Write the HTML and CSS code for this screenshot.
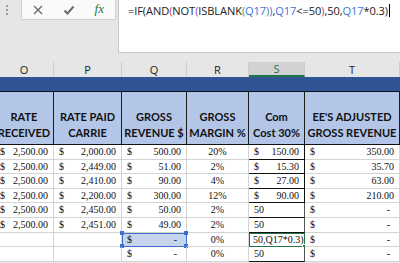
FILE: index.html
```html
<!DOCTYPE html>
<html lang="en">
<head>
    <meta charset="UTF-8">
    <title>Sheet - Com Cost</title>
    <link rel="stylesheet" href="styles.css">
</head>
<body>

<div class="formula-bar">
    <div class="grip"><i></i><i></i><i></i></div>
    <div class="fx-box">
        <svg class="ico" width="12" height="12" viewBox="0 0 12 12"><path d="M2 2 L10 10 M10 2 L2 10" stroke="#6b6b6b" stroke-width="1.4" fill="none"/></svg>
        <svg class="ico" width="12" height="12" viewBox="0 0 12 12"><path d="M1.5 6.5 L4.5 9.5 L10.5 2.5" stroke="#6b6b6b" stroke-width="2" fill="none"/></svg>
        <span class="fx">fx</span>
    </div>
    <div class="formula">=IF(AND<span class="p2">(</span>NOT<span class="p3">(</span>ISBLANK<span class="p4">(</span><span class="ref">Q17</span><span class="p4">)</span><span class="p3">)</span>,<span class="ref">Q17</span>&lt;=50<span class="p2">)</span>,50,<span class="ref">Q17</span>*0.3)<span class="caret"></span></div>
</div>

<div class="sheet">
    <div class="col-heads">
        <div>O</div>
        <div>P</div>
        <div>Q</div>
        <div>R</div>
        <div class="active">S</div>
        <div>T</div>
    </div>
    <div class="band"></div>

    <div class="grid">
        <div class="hd">RATE<br>RECEIVED</div>
        <div class="hd">RATE PAID<br>CARRIE</div>
        <div class="hd">GROSS<br>REVENUE $</div>
        <div class="hd">GROSS<br>MARGIN %</div>
        <div class="hd">Com<br>Cost 30%</div>
        <div class="hd">EE'S ADJUSTED<br>GROSS REVENUE</div>

        <div class="c acc"><span>$</span><span>2,500.00</span></div>
        <div class="c acc"><span>$</span><span>2,000.00</span></div>
        <div class="c acc"><span>$</span><span>500.00</span></div>
        <div class="c pct">20%</div>
        <div class="c acc com strong"><span>$</span><span>150.00</span></div>
        <div class="c acc"><span>$</span><span>350.00</span></div>

        <div class="c acc"><span>$</span><span>2,500.00</span></div>
        <div class="c acc"><span>$</span><span>2,449.00</span></div>
        <div class="c acc"><span>$</span><span>51.00</span></div>
        <div class="c pct">2%</div>
        <div class="c acc com strong"><span>$</span><span>15.30</span></div>
        <div class="c acc"><span>$</span><span>35.70</span></div>

        <div class="c acc"><span>$</span><span>2,500.00</span></div>
        <div class="c acc"><span>$</span><span>2,410.00</span></div>
        <div class="c acc"><span>$</span><span>90.00</span></div>
        <div class="c pct">4%</div>
        <div class="c acc com strong"><span>$</span><span>27.00</span></div>
        <div class="c acc"><span>$</span><span>63.00</span></div>

        <div class="c acc"><span>$</span><span>2,500.00</span></div>
        <div class="c acc"><span>$</span><span>2,200.00</span></div>
        <div class="c acc"><span>$</span><span>300.00</span></div>
        <div class="c pct">12%</div>
        <div class="c acc com strong"><span>$</span><span>90.00</span></div>
        <div class="c acc"><span>$</span><span>210.00</span></div>

        <div class="c acc"><span>$</span><span>2,500.00</span></div>
        <div class="c acc"><span>$</span><span>2,450.00</span></div>
        <div class="c acc"><span>$</span><span>50.00</span></div>
        <div class="c pct">2%</div>
        <div class="c com">50</div>
        <div class="c acc"><span>$</span><span class="dash">-</span></div>

        <div class="c acc"><span>$</span><span>2,500.00</span></div>
        <div class="c acc"><span>$</span><span>2,451.00</span></div>
        <div class="c acc"><span>$</span><span>49.00</span></div>
        <div class="c pct">2%</div>
        <div class="c com">50</div>
        <div class="c acc"><span>$</span><span class="dash">-</span></div>

        <div class="c"></div>
        <div class="c"></div>
        <div class="c acc sel"><span>$</span><span class="dash">-</span>
            <i class="h tl"></i><i class="h tr"></i><i class="h bl"></i><i class="h br"></i>
        </div>
        <div class="c pct">0%</div>
        <div class="c com editing">50,Q17*0.3)<i class="fill"></i></div>
        <div class="c acc"><span>$</span><span class="dash">-</span></div>

        <div class="c"></div>
        <div class="c"></div>
        <div class="c acc"><span>$</span><span class="dash">-</span></div>
        <div class="c pct">0%</div>
        <div class="c com">50</div>
        <div class="c acc"><span>$</span><span class="dash">-</span></div>
    </div>
</div>

</body>
</html>
```

FILE: styles.css
```css
/* Reset */
* {
    margin: 0;
    padding: 0;
    box-sizing: border-box;
}
body {
    width: 400px;
    height: 263px;
    overflow: hidden;
    background: #e6e6e6;
    font-family: 'Open Sans', 'Noto Sans', sans-serif;
    color: #222;
}
/* Formula bar */
.formula-bar {
    height: 62px;
    display: flex;
    align-items: flex-start;
    padding-bottom: 9px;
}
.grip {
    width: 21px;
    padding: 5px 0 0 6px;
    display: flex;
    flex-direction: column;
    gap: 2px;
}
.grip i {
    width: 2px;
    height: 2px;
    background: #9a9a9a;
}
.fx-box {
    width: 95px;
    height: 21px;
    margin-top: -1px;
    background: #fafafa;
    border: 1px solid #d0d0d0;
    display: flex;
    align-items: center;
    justify-content: space-between;
    padding: 0 11px 0 10px;
}
.fx {
    font-family: 'Liberation Serif', serif;
    font-style: italic;
    font-size: 13px;
    color: #217346;
    margin-top: -2px;
}
.formula {
    flex: 1;
    height: 54px;
    margin: -1px 0 0 2px;
    background: #fff;
    border: 1px solid #c8c8c8;
    border-right: none;
    padding: 3px 0 0 9px;
    font-size: 11.1px;
    letter-spacing: -0.1px;
    white-space: nowrap;
    color: #222;
}
.formula .ref { color: #3a73d6; }
.formula .p2 { color: #e0305a; }
.formula .p3 { color: #9b3fc6; }
.formula .p4 { color: #3a9a4e; }
.caret {
    display: inline-block;
    width: 1px;
    height: 13px;
    background: #000;
    vertical-align: -2px;
    margin-left: 1px;
}
/* Sheet */
.sheet {
    margin-left: -5px;
}
.col-heads, .grid {
    display: grid;
    grid-template-columns: 59px 68px 65px 62px 56px 95px;
}
.col-heads div {
    height: 15px;
    border-right: 1px solid #cdcdcd;
    text-align: center;
    font-size: 11px;
    line-height: 15px;
    color: #222;
}
.col-heads .active {
    background: #d2d2d2;
    color: #217346;
    border-bottom: 2px solid #217346;
    line-height: 14px;
}
.band {
    height: 15px;
    background: #2f5597;
    border-bottom: 1.5px solid #111;
}
.grid {
    grid-template-rows: 53px repeat(8, 14.6px);
    background: #fff;
}
.hd {
    background: #b4c6e7;
    border-right: 1.5px solid #1c1c1c;
    border-bottom: 1.5px solid #111;
    font-family: 'Lato', sans-serif;
    font-weight: 700;
    font-size: 11px;
    line-height: 16px;
    text-align: center;
    white-space: nowrap;
    overflow: hidden;
    display: flex;
    align-items: flex-end;
    justify-content: center;
    padding-bottom: 3px;
    color: #111;
}
.c {
    border-right: 1px solid #d4d4d4;
    border-bottom: 1px solid #d4d4d4;
    font-family: 'Liberation Serif', serif;
    font-size: 10px;
    line-height: 13px;
    padding: 0 5px;
    white-space: nowrap;
    color: #111;
    position: relative;
}
.acc {
    display: flex;
    justify-content: space-between;
}
.dash { padding-right: 4px; }
.pct { text-align: center; }
.com {
    border-bottom: 1.5px solid #111;
    border-right-color: #555;
}
.com.strong { border-right: 1.5px solid #111; }
/* selection */
.sel {
    background: #c6d5ee;
    outline: 1.5px solid #3d6fc7;
    outline-offset: -1px;
}
.h {
    position: absolute;
    width: 4px;
    height: 4px;
    background: #3d6fc7;
}
.tl { top: -2px; left: -2px; }
.tr { top: -2px; right: -2px; }
.bl { bottom: -2px; left: -2px; }
.br { bottom: -2px; right: -2px; }
.editing {
    outline: 1.5px solid #217346;
    outline-offset: -1px;
    padding-left: 4px;
}
.fill {
    position: absolute;
    right: -2px;
    bottom: -2px;
    width: 4px;
    height: 4px;
    background: #217346;
    border: 1px solid #fff;
}
```
